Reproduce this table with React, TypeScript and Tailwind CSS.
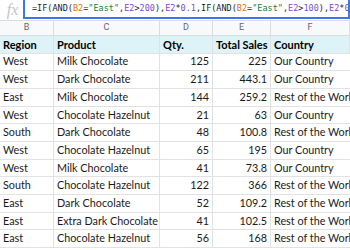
import React from "react";

const rows: [string, string, string, string, string][] = [
  ["West", "Milk Chocolate", "125", "225", "Our Country"],
  ["West", "Dark Chocolate", "211", "443.1", "Our Country"],
  ["East", "Milk Chocolate", "144", "259.2", "Rest of the World"],
  ["West", "Chocolate Hazelnut", "21", "63", "Our Country"],
  ["South", "Dark Chocolate", "48", "100.8", "Rest of the World"],
  ["West", "Chocolate Hazelnut", "65", "195", "Our Country"],
  ["West", "Milk Chocolate", "41", "73.8", "Our Country"],
  ["South", "Chocolate Hazelnut", "122", "366", "Rest of the World"],
  ["East", "Dark Chocolate", "52", "109.2", "Rest of the World"],
  ["East", "Extra Dark Chocolate", "41", "102.5", "Rest of the World"],
  ["East", "Chocolate Hazelnut", "56", "168", "Rest of the World"],
];

const grid = "grid grid-cols-[54px_106px_53px_58px_1fr]";

export default function App() {
  const R = ({ children }: { children: React.ReactNode }) => (
    <span className="text-[#e37400]">{children}</span>
  );
  const E = ({ children }: { children: React.ReactNode }) => (
    <span className="text-[#8e3fd6]">{children}</span>
  );
  const S = ({ children }: { children: React.ReactNode }) => (
    <span className="text-[#188038]">{children}</span>
  );
  const N = ({ children }: { children: React.ReactNode }) => (
    <span className="text-[#7b4fd0]">{children}</span>
  );
  return (
    <div className="w-[350px] h-[250px] overflow-hidden bg-white text-black" style={{ fontFamily: "Lato, 'Open Sans', sans-serif" }}>
      {/* formula bar */}
      <div className="flex h-[21px] border-b border-[#dadce0] bg-white">
        <div className="w-[23px] flex items-center justify-center text-[#c4c4c4] italic text-[16px] leading-none pl-[2px]" style={{ fontFamily: "'Liberation Serif', serif" }}>
          fx
        </div>
        <div className="flex-1 mt-[-2px] h-[21px] border-2 border-[#3b78e7] flex items-center pl-[7px] overflow-hidden whitespace-nowrap">
          <span className="text-[8.5px] text-[#222]" style={{ fontFamily: "'DejaVu Sans Mono', monospace" }}>
            =IF(AND(<R>B2</R>=<S>"East"</S>,<E>E2</E>&gt;<N>200</N>),<E>E2</E>*<N>0.1</N>,IF(AND(<R>B2</R>=<S>"East"</S>,<E>E2</E>&gt;<N>100</N>),<E>E2</E>*<N>0</N>
          </span>
        </div>
      </div>
      {/* column letters */}
      <div className={`${grid} h-[15px] border-b border-[#dadce0] bg-[#f8f9fa] text-[9px] text-[#666]`} style={{ fontFamily: "Roboto, sans-serif" }}>
        {["B", "C", "D", "E", "F"].map((c) => (
          <div key={c} className="border-r border-[#dadce0] flex items-center justify-center">
            {c}
          </div>
        ))}
      </div>
      {/* header row */}
      <div className={`${grid} h-[17.5px] bg-[#ddf3f8] font-bold text-[11px] leading-none`}>
        {["Region", "Product", "Qty.", "Total Sales", "Country"].map((h) => (
          <div key={h} className="border-r border-b border-[#e2e2e2] flex items-center pl-[3px] whitespace-nowrap overflow-hidden">
            {h}
          </div>
        ))}
      </div>
      {rows.map((r, i) => (
        <div key={i} className={`${grid} h-[17.7px] text-[10.8px] leading-none text-[#1a1a1a]`}>
          <div className="border-r border-b border-[#e2e2e2] flex items-center pl-[3px] whitespace-nowrap">{r[0]}</div>
          <div className="border-r border-b border-[#e2e2e2] flex items-center pl-[3px] whitespace-nowrap overflow-hidden">{r[1]}</div>
          <div className="border-r border-b border-[#e2e2e2] flex items-center justify-end pr-[3px]">{r[2]}</div>
          <div className="border-r border-b border-[#e2e2e2] flex items-center justify-end pr-[3px]">{r[3]}</div>
          <div className="border-b border-[#e2e2e2] flex items-center pl-[3px] whitespace-nowrap overflow-hidden">{r[4]}</div>
        </div>
      ))}
    </div>
  );
}
